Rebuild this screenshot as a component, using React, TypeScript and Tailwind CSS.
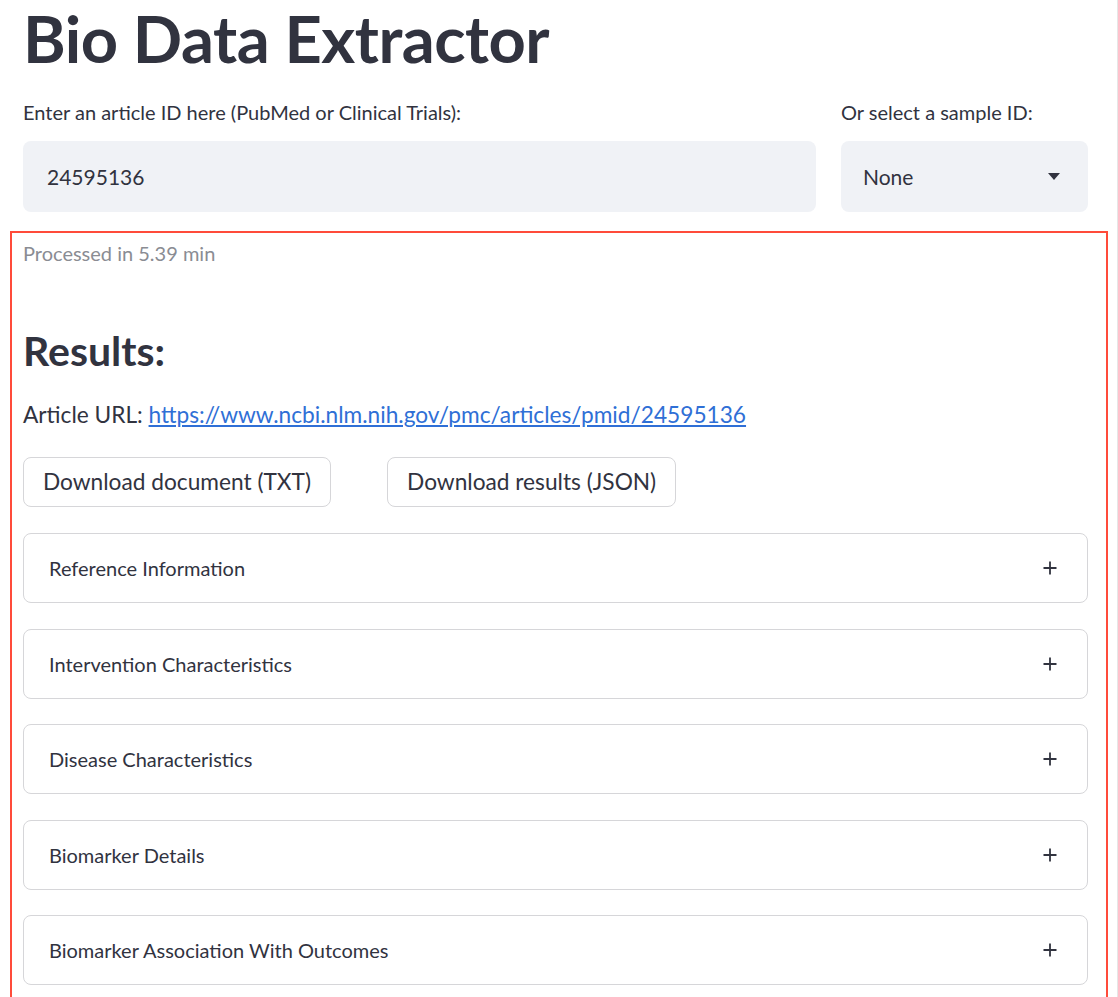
import React from 'react';

const sections = [
    'Reference Information',
    'Intervention Characteristics',
    'Disease Characteristics',
    'Biomarker Details',
    'Biomarker Association With Outcomes',
];

function Plus() {
    return (
        <svg width="16" height="16" viewBox="0 0 16 16" fill="none" stroke="#31333f" strokeWidth="1.8">
            <path d="M8 1.5v13M1.5 8h13" />
        </svg>
    );
}

export default function App() {
    return (
        <div className="min-h-[997px] w-[1118px] overflow-hidden bg-white text-[#31333f] font-['Lato',sans-serif] border-r border-[#e6e6e6]">
            <div className="pl-[23px] pr-[29px]">
                <h1 className="text-[65px] font-bold leading-[76px] tracking-[-0.5px]">Bio Data Extractor</h1>
                <div className="mt-[24px] flex gap-[25px]">
                    <div className="flex-1">
                        <div className="text-[20px] leading-[24px]">Enter an article ID here (PubMed or Clinical Trials):</div>
                        <div className="mt-[17px] flex h-[71px] items-center rounded-[8px] bg-[#f0f2f6] px-[24px] text-[21px]">24595136</div>
                    </div>
                    <div className="w-[247px]">
                        <div className="text-[20px] leading-[24px]">Or select a sample ID:</div>
                        <div className="mt-[17px] flex h-[71px] items-center justify-between rounded-[8px] bg-[#f0f2f6] pl-[22px] pr-[28px] text-[21px]">
                            <span>None</span>
                            <svg width="12" height="7" viewBox="0 0 12 7" fill="#31333f">
                                <path d="M0 0h12L6 7z" />
                            </svg>
                        </div>
                    </div>
                </div>
            </div>
            <div className="ml-[10px] mr-[9px] mt-[19px] border-2 border-[#ff4b3a] pl-[11px] pr-[18px] pb-[20px]">
                <div className="pt-[8px] text-[20px] leading-[24px] text-[#8a8c93]">Processed in 5.39 min</div>
                <h2 className="mt-[61px] text-[41px] font-bold leading-[50px]">Results:</h2>
                <div className="mt-[24px] text-[22.7px] leading-[30px]">
                    Article URL:{' '}
                    <a href="#" className="text-[#2f6fd6] underline">https://www.ncbi.nlm.nih.gov/pmc/articles/pmid/24595136</a>
                </div>
                <div className="mt-[27px] flex gap-[56px]">
                    <button className="h-[50px] rounded-[8px] border border-[#d6d6d9] bg-white px-[19px] text-[22.7px]">Download document (TXT)</button>
                    <button className="h-[50px] rounded-[8px] border border-[#d6d6d9] bg-white px-[19px] text-[22.7px]">Download results (JSON)</button>
                </div>
                <div className="mt-[26px] flex flex-col gap-[25.5px]">
                    {sections.map((s, i) => (
                        <div key={i} className="flex h-[70px] items-center justify-between rounded-[8px] border border-[#d6d6d9] pl-[25px] pr-[29px]">
                            <span className="text-[20px]">{s}</span>
                            <Plus />
                        </div>
                    ))}
                </div>
            </div>
        </div>
    );
}
